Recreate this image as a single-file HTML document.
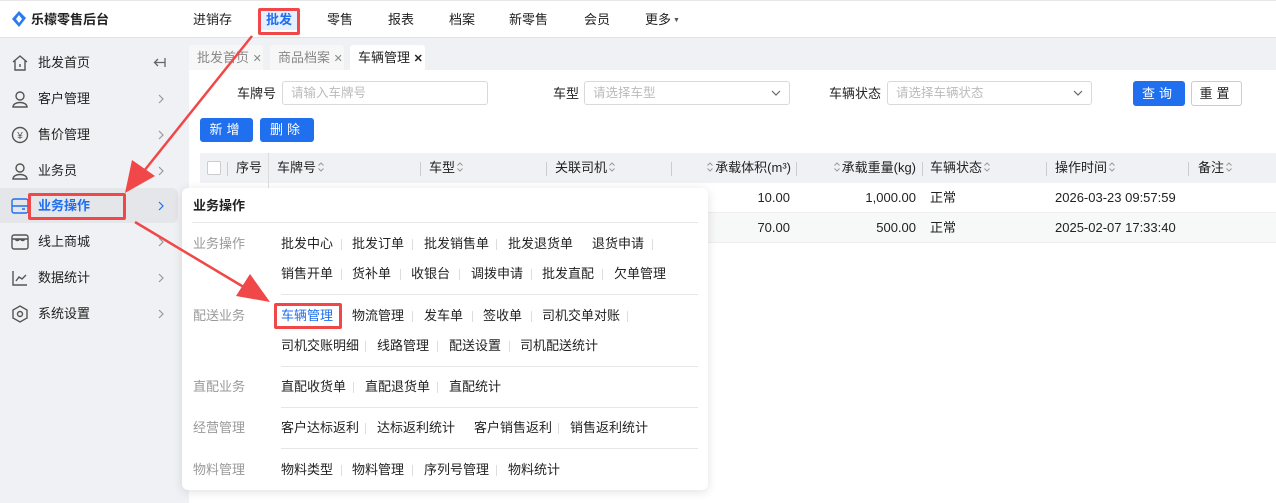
<!DOCTYPE html>
<html><head><meta charset="utf-8">
<style>
*{box-sizing:border-box;margin:0;padding:0}
body{width:1276px;height:503px;overflow:hidden;background:#f0f1f4;font-family:"Liberation Sans","Noto Sans CJK SC",sans-serif;font-size:13px;line-height:16px;color:#222;position:relative}
.a{position:absolute;white-space:nowrap}
.top{position:absolute;left:0;top:0;width:1276px;height:38px;background:#fff;border-bottom:1px solid #e2e2e2;border-top:1px solid #e6e6e6}
.nav{top:12px;font-size:13px;color:#222}
.side{font-size:13px;color:#222}
.btn{position:absolute;background:#1f6fee;color:#fff;border-radius:3px;text-align:center;font-size:13px;letter-spacing:4px}
.inp{position:absolute;border:1px solid #d9d9d9;border-radius:3px;height:24px;background:#fff;color:#bbb;font-size:12.5px;padding:3px 8px;line-height:16px}
.th{top:160px;font-size:13px;color:#222}
.sep{position:absolute;width:1px;height:14px;background:#ccc}
.red{position:absolute;border:3px solid #f04848;border-radius:2px}
.lbl{color:#999;font-size:13px}
.it{font-size:13px;color:#222}
.bar{position:absolute;width:1px;height:11px;background:#ddd}
.hl{position:absolute;height:1px;background:#e6e6e6}
.s{display:inline-block;width:8px;height:12px;vertical-align:-1px;margin:0 1px}
</style></head><body>
<svg width="0" height="0" style="position:absolute"><defs><symbol id="so" viewBox="0 0 8 12"><path d="M1.5 4.5 L4 2 L6.5 4.5 M1.5 7.5 L4 10 L6.5 7.5" fill="none" stroke="#999" stroke-width="1"/></symbol><symbol id="ch" viewBox="0 0 8 12"><path d="M2 2 L6 6 L2 10" fill="none" stroke="currentColor" stroke-width="1.2"/></symbol></defs></svg>
<div class="top"></div>
<svg class="a" style="left:12px;top:11px" width="14" height="16" viewBox="0 0 14 16"><path d="M7 0 L14 7 L7 16 L0 8 Z" fill="#2b7bf0"/><path d="M7 4 L10 8 L7 12 L4 8 Z" fill="#fff"/></svg>
<div class="a" style="left:31px;top:12px;font-weight:bold;font-size:13px">乐檬零售后台</div>
<div class="a nav" style="left:193px">进销存</div>
<div class="a" style="left:261px;top:10px;width:36px;height:20px;background:#e6efff"></div>
<div class="a nav" style="left:266px;color:#1f6fee;font-weight:bold">批发</div>
<div class="a nav" style="left:327px">零售</div>
<div class="a nav" style="left:388px">报表</div>
<div class="a nav" style="left:449px">档案</div>
<div class="a nav" style="left:509px">新零售</div>
<div class="a nav" style="left:584px">会员</div>
<div class="a nav" style="left:645px">更多<span style="font-size:7px;color:#555;vertical-align:2px"> ▼</span></div>
<div class="red" style="left:258px;top:8px;width:42px;height:27px"></div>

<!-- sidebar -->
<div class="a" style="left:0;top:188px;width:178px;height:35px;background:#e5e6ea;border-radius:0 6px 6px 0"></div>
<svg class="a" style="left:11px;top:54px" width="18" height="18" viewBox="0 0 18 18" fill="none" stroke="#555" stroke-width="1.4"><path d="M2 8 L9 2 L16 8 M4 7 V16 H14 V7"/><path d="M9 10 V13"/></svg>
<div class="a side" style="left:38px;top:55px">批发首页</div>
<svg class="a" style="left:153px;top:57px" width="13" height="11" viewBox="0 0 13 11" fill="none" stroke="#666" stroke-width="1.3"><path d="M12 5.5 H2 M5 2 L1.5 5.5 L5 9 M12 1 V10"/></svg>
<svg class="a" style="left:11px;top:90px" width="18" height="18" viewBox="0 0 18 18" fill="none" stroke="#555" stroke-width="1.4"><circle cx="9" cy="6" r="4"/><path d="M2 17 C2 11 16 11 16 17 Z"/></svg>
<div class="a side" style="left:38px;top:91px">客户管理</div>
<svg class="a" style="left:11px;top:126px" width="18" height="18" viewBox="0 0 18 18" fill="none" stroke="#555" stroke-width="1.4"><circle cx="9" cy="9" r="7.5"/><text x="9" y="13" font-size="10" text-anchor="middle" fill="#555" stroke="none">¥</text></svg>
<div class="a side" style="left:38px;top:127px">售价管理</div>
<svg class="a" style="left:11px;top:162px" width="18" height="18" viewBox="0 0 18 18" fill="none" stroke="#555" stroke-width="1.4"><circle cx="9" cy="6" r="4"/><path d="M2 17 C2 11 16 11 16 17 Z"/></svg>
<div class="a side" style="left:38px;top:163px">业务员</div>
<svg class="a" style="left:11px;top:198px" width="18" height="16" viewBox="0 0 18 16" fill="none" stroke="#1f6fee" stroke-width="1.4"><rect x="1" y="1" width="16" height="14" rx="2"/><path d="M1 8 H17 M11 11 H14"/></svg>
<div class="a side" style="left:38px;top:198px;color:#1f6fee;font-weight:bold">业务操作</div>
<svg class="a" style="left:11px;top:234px" width="18" height="16" viewBox="0 0 18 16" fill="none" stroke="#555" stroke-width="1.4"><rect x="1" y="1" width="16" height="14" rx="2"/><path d="M1 5 H17 M4 5 Q6 8 9 5 Q12 8 14 5"/></svg>
<div class="a side" style="left:38px;top:234px">线上商城</div>
<svg class="a" style="left:12px;top:270px" width="16" height="16" viewBox="0 0 16 16" fill="none" stroke="#555" stroke-width="1.4"><path d="M1 1 V15 H15 M4 11 L7 7 L10 9 L14 5"/></svg>
<div class="a side" style="left:38px;top:270px">数据统计</div>
<svg class="a" style="left:11px;top:305px" width="18" height="18" viewBox="0 0 18 18" fill="none" stroke="#555" stroke-width="1.4"><path d="M9 1 L16 5 V13 L9 17 L2 13 V5 Z"/><circle cx="9" cy="9" r="2.5"/></svg>
<div class="a side" style="left:38px;top:306px">系统设置</div>
<svg class="a" style="left:157px;top:93px;color:#999" width="8" height="12"><use href="#ch"/></svg>
<svg class="a" style="left:157px;top:129px;color:#999" width="8" height="12"><use href="#ch"/></svg>
<svg class="a" style="left:157px;top:165px;color:#999" width="8" height="12"><use href="#ch"/></svg>
<svg class="a" style="left:157px;top:200px;color:#1f6fee" width="8" height="12"><use href="#ch"/></svg>
<svg class="a" style="left:157px;top:236px;color:#999" width="8" height="12"><use href="#ch"/></svg>
<svg class="a" style="left:157px;top:272px;color:#999" width="8" height="12"><use href="#ch"/></svg>
<svg class="a" style="left:157px;top:308px;color:#999" width="8" height="12"><use href="#ch"/></svg>
<div class="red" style="left:28px;top:193px;width:98px;height:27px"></div>

<!-- tabs -->
<div class="a" style="left:189px;top:45px;width:74px;height:25px;background:#f7f7f7;border-radius:3px 3px 0 0;color:#888;padding:5px 8px">批发首页 <span style="font-size:11px">✕</span></div>
<div class="a" style="left:270px;top:45px;width:74px;height:25px;background:#f7f7f7;border-radius:3px 3px 0 0;color:#888;padding:5px 8px">商品档案 <span style="font-size:11px">✕</span></div>
<div class="a" style="left:350px;top:45px;width:75px;height:25px;background:#fff;border-radius:3px 3px 0 0;color:#222;padding:5px 8px">车辆管理 <b style="font-size:11px">✕</b></div>
<div class="a" style="left:189px;top:70px;width:1087px;height:433px;background:#fff"></div>

<!-- filters -->
<div class="a" style="left:237px;top:86px">车牌号</div>
<div class="inp" style="left:282px;top:81px;width:206px">请输入车牌号</div>
<div class="a" style="left:553px;top:86px">车型</div>
<div class="inp" style="left:584px;top:81px;width:206px">请选择车型<svg style="position:absolute;right:8px;top:8px" width="10" height="6"><path d="M1 1 L5 5 L9 1" fill="none" stroke="#666" stroke-width="1.2"/></svg></div>
<div class="a" style="left:829px;top:86px">车辆状态</div>
<div class="inp" style="left:887px;top:81px;width:205px">请选择车辆状态<svg style="position:absolute;right:8px;top:8px" width="10" height="6"><path d="M1 1 L5 5 L9 1" fill="none" stroke="#666" stroke-width="1.2"/></svg></div>
<div class="btn" style="left:1133px;top:81px;width:52px;height:25px;line-height:25px">查询</div>
<div class="a" style="left:1191px;top:81px;width:51px;height:25px;border:1px solid #ccc;border-radius:3px;text-align:center;line-height:23px;letter-spacing:4px">重置</div>
<div class="btn" style="left:200px;top:118px;width:53px;height:24px;line-height:24px">新增</div>
<div class="btn" style="left:260px;top:118px;width:54px;height:24px;line-height:24px">删除</div>

<!-- table -->
<div class="a" style="left:200px;top:153px;width:1076px;height:30px;background:#f0f1f4"></div>
<div class="a" style="left:200px;top:183px;width:1076px;height:30px;border-bottom:1px solid #eee"></div>
<div class="a" style="left:200px;top:213px;width:1076px;height:30px;background:#f7f8f8;border-bottom:1px solid #eee"></div>
<div class="a" style="left:268px;top:153px;width:1px;height:90px;background:#ddd"></div>
<div class="a" style="left:207px;top:161px;width:14px;height:14px;border:1px solid #ccc;background:#fff;border-radius:2px"></div>
<div class="sep" style="left:227px;top:162px"></div>
<div class="a th" style="left:236px">序号</div>
<div class="a th" style="left:277px">车牌号<svg class="s"><use href="#so"/></svg></div>
<div class="sep" style="left:420px;top:162px"></div>
<div class="a th" style="left:429px">车型<svg class="s"><use href="#so"/></svg></div>
<div class="sep" style="left:546px;top:162px"></div>
<div class="a th" style="left:555px">关联司机<svg class="s"><use href="#so"/></svg></div>
<div class="sep" style="left:671px;top:162px"></div>
<div class="a th" style="right:485px"><svg class="s"><use href="#so"/></svg>承载体积(m³)</div>
<div class="sep" style="left:796px;top:162px"></div>
<div class="a th" style="right:360px"><svg class="s"><use href="#so"/></svg>承载重量(kg)</div>
<div class="sep" style="left:922px;top:162px"></div>
<div class="a th" style="left:930px">车辆状态<svg class="s"><use href="#so"/></svg></div>
<div class="sep" style="left:1046px;top:162px"></div>
<div class="a th" style="left:1055px">操作时间<svg class="s"><use href="#so"/></svg></div>
<div class="sep" style="left:1188px;top:162px"></div>
<div class="a th" style="left:1198px">备注<svg class="s"><use href="#so"/></svg></div>
<div class="a" style="right:486px;top:190px">10.00</div>
<div class="a" style="right:360px;top:190px">1,000.00</div>
<div class="a" style="left:930px;top:190px">正常</div>
<div class="a" style="left:1055px;top:190px">2026-03-23 09:57:59</div>
<div class="a" style="right:486px;top:220px">70.00</div>
<div class="a" style="right:360px;top:220px">500.00</div>
<div class="a" style="left:930px;top:220px">正常</div>
<div class="a" style="left:1055px;top:220px">2025-02-07 17:33:40</div>

<!-- popup -->
<div class="a" style="left:182px;top:188px;width:526px;height:302px;background:#fff;border-radius:6px;box-shadow:0 2px 10px rgba(0,0,0,.12)"></div>
<div class="a" style="left:193px;top:198px;font-weight:bold">业务操作</div>
<div class="hl" style="left:192px;top:222px;width:506px"></div>
<div class="a lbl" style="left:193px;top:236px">业务操作</div>
<div class="a lbl" style="left:193px;top:308px">配送业务</div>
<div class="a lbl" style="left:193px;top:379px">直配业务</div>
<div class="a lbl" style="left:193px;top:420px">经营管理</div>
<div class="a lbl" style="left:193px;top:462px">物料管理</div>
<div class="hl" style="left:281px;top:294px;width:417px"></div>
<div class="hl" style="left:281px;top:366px;width:417px"></div>
<div class="hl" style="left:281px;top:407px;width:417px"></div>
<div class="hl" style="left:281px;top:448px;width:417px"></div>

<div class="a it" style="left:281px;top:236px">批发中心</div><div class="bar" style="left:341px;top:239px"></div>
<div class="a it" style="left:352px;top:236px">批发订单</div><div class="bar" style="left:412px;top:239px"></div>
<div class="a it" style="left:424px;top:236px">批发销售单</div><div class="bar" style="left:496px;top:239px"></div>
<div class="a it" style="left:508px;top:236px">批发退货单</div>
<div class="a it" style="left:592px;top:236px">退货申请</div><div class="bar" style="left:652px;top:239px"></div>
<div class="a it" style="left:281px;top:266px">销售开单</div><div class="bar" style="left:341px;top:269px"></div>
<div class="a it" style="left:352px;top:266px">货补单</div><div class="bar" style="left:400px;top:269px"></div>
<div class="a it" style="left:411px;top:266px">收银台</div><div class="bar" style="left:459px;top:269px"></div>
<div class="a it" style="left:471px;top:266px">调拨申请</div><div class="bar" style="left:531px;top:269px"></div>
<div class="a it" style="left:542px;top:266px">批发直配</div><div class="bar" style="left:602px;top:269px"></div>
<div class="a it" style="left:614px;top:266px">欠单管理</div>

<div class="a it" style="left:281px;top:308px;color:#1f6fee">车辆管理</div><div class="bar" style="left:341px;top:311px"></div>
<div class="a it" style="left:352px;top:308px">物流管理</div><div class="bar" style="left:412px;top:311px"></div>
<div class="a it" style="left:424px;top:308px">发车单</div><div class="bar" style="left:472px;top:311px"></div>
<div class="a it" style="left:483px;top:308px">签收单</div><div class="bar" style="left:531px;top:311px"></div>
<div class="a it" style="left:542px;top:308px">司机交单对账</div><div class="bar" style="left:627px;top:311px"></div>
<div class="a it" style="left:281px;top:338px">司机交账明细</div><div class="bar" style="left:365px;top:341px"></div>
<div class="a it" style="left:377px;top:338px">线路管理</div><div class="bar" style="left:437px;top:341px"></div>
<div class="a it" style="left:449px;top:338px">配送设置</div><div class="bar" style="left:509px;top:341px"></div>
<div class="a it" style="left:520px;top:338px">司机配送统计</div>
<div class="red" style="left:274px;top:303px;width:68px;height:26px"></div>

<div class="a it" style="left:281px;top:379px">直配收货单</div><div class="bar" style="left:353px;top:382px"></div>
<div class="a it" style="left:365px;top:379px">直配退货单</div><div class="bar" style="left:437px;top:382px"></div>
<div class="a it" style="left:449px;top:379px">直配统计</div>
<div class="a it" style="left:281px;top:420px">客户达标返利</div><div class="bar" style="left:365px;top:423px"></div>
<div class="a it" style="left:377px;top:420px">达标返利统计</div>
<div class="a it" style="left:474px;top:420px">客户销售返利</div><div class="bar" style="left:558px;top:423px"></div>
<div class="a it" style="left:570px;top:420px">销售返利统计</div>
<div class="a it" style="left:281px;top:462px">物料类型</div><div class="bar" style="left:341px;top:465px"></div>
<div class="a it" style="left:352px;top:462px">物料管理</div><div class="bar" style="left:412px;top:465px"></div>
<div class="a it" style="left:424px;top:462px">序列号管理</div><div class="bar" style="left:496px;top:465px"></div>
<div class="a it" style="left:508px;top:462px">物料统计</div>

<!-- arrows -->
<svg class="a" style="left:0;top:0" width="1276" height="503" viewBox="0 0 1276 503">
<g stroke="#f04848" stroke-width="2.5" fill="#f04848">
<line x1="252" y1="36" x2="140" y2="176"/>
<polygon points="125,193 132,160 155,176" stroke="none"/>
<line x1="135" y1="222" x2="252" y2="292"/>
<polygon points="270,302 236,296 250,274" stroke="none"/>
</g></svg>
</body></html>
